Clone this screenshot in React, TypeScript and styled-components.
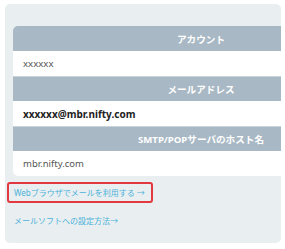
import styled, { createGlobalStyle } from "styled-components";

const GlobalStyle = createGlobalStyle`
  html, body {
    margin: 0;
    padding: 0;
    background: #ffffff;
  }
  body {
    font-family: "Noto Sans", "Noto Sans CJK JP", sans-serif;
  }
`;

type Row = { label: string; value: string; variant: "muted" | "bold" | "plain" };

const rows: Row[] = [
  { label: "アカウント", value: "xxxxxx", variant: "muted" },
  { label: "メールアドレス", value: "xxxxxx@mbr.nifty.com", variant: "bold" },
  { label: "SMTP/POPサーバのホスト名", value: "mbr.nifty.com", variant: "plain" },
];

const App = () => {
  return (
    <>
      <GlobalStyle />
      <Panel>
        <InfoTable>
          {rows.map((row) => (
            <Group key={row.label}>
              <HeadCell>{row.label}</HeadCell>
              <ValueCell $variant={row.variant}>{row.value}</ValueCell>
            </Group>
          ))}
        </InfoTable>
        <Links>
          <LinkItem $highlight>Webブラウザでメールを利用する →</LinkItem>
          <LinkItem>メールソフトへの設定方法→</LinkItem>
        </Links>
      </Panel>
    </>
  );
};

export default App;

const Panel = styled.div`
  width: 276px;
  height: 239px;
  margin: 4px 0 0 5px;
  padding: 22px 0 0 2px;
  box-sizing: border-box;
  background-color: #e9eef1;
  border-radius: 5px;
  overflow: hidden;
`;

const InfoTable = styled.div`
  width: 376px;
  margin-left: 6px;
  border-radius: 5px;
  overflow: hidden;
  display: flex;
  flex-direction: column;
`;

const Group = styled.div`
  display: flex;
  flex-direction: column;
`;

const HeadCell = styled.div`
  height: 25px;
  display: flex;
  align-items: center;
  justify-content: center;
  background-color: #a8b8c4;
  color: #ffffff;
  font-weight: 700;
  font-size: 9.6px;
  border-top: 1px solid #c9d3da;
  box-sizing: border-box;

  ${Group}:first-child & {
    border-top: none;
  }
`;

const ValueCell = styled.div<{ $variant: Row["variant"] }>`
  height: 25px;
  display: flex;
  align-items: center;
  padding-left: 10px;
  background-color: #ffffff;
  color: ${(p) => (p.$variant === "bold" ? "#222222" : "#555555")};
  font-weight: ${(p) => (p.$variant === "bold" ? 700 : 400)};
  font-size: ${(p) => (p.$variant === "muted" ? "9.6px" : p.$variant === "bold" ? "10px" : "9.5px")};
`;

const Links = styled.div`
  display: flex;
  flex-direction: column;
  align-items: flex-start;
  gap: 7px;
  margin-top: 6px;
`;

const LinkItem = styled.a<{ $highlight?: boolean }>`
  display: flex;
  align-items: center;
  height: 21px;
  box-sizing: border-box;
  padding: 0 6px 0 5px;
  border: 2px solid ${(p) => (p.$highlight ? "#e2383f" : "transparent")};
  border-radius: 3px;
  color: #4bb2d8;
  font-size: 8px;
  cursor: pointer;
`;
